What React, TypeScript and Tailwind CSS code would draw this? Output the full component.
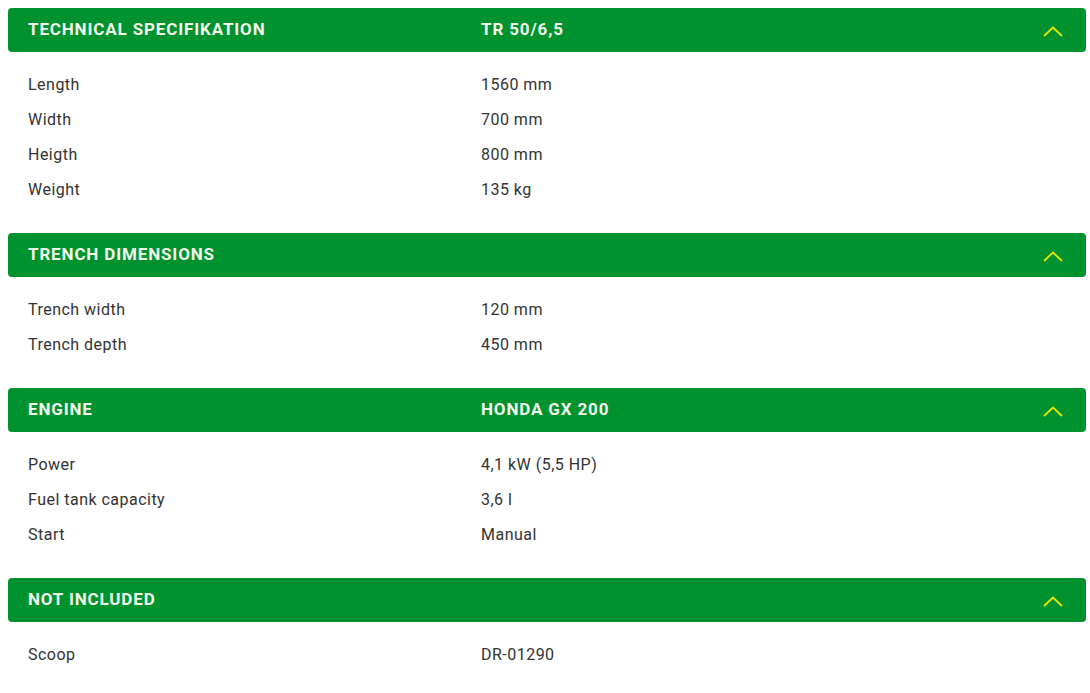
import React from "react";

type Section = {
  title: string;
  value?: string;
  rows: [string, string][];
};

const sections: Section[] = [
  {
    title: "TECHNICAL SPECIFIKATION",
    value: "TR 50/6,5",
    rows: [
      ["Length", "1560 mm"],
      ["Width", "700 mm"],
      ["Heigth", "800 mm"],
      ["Weight", "135 kg"],
    ],
  },
  {
    title: "TRENCH DIMENSIONS",
    rows: [
      ["Trench width", "120 mm"],
      ["Trench depth", "450 mm"],
    ],
  },
  {
    title: "ENGINE",
    value: "HONDA GX 200",
    rows: [
      ["Power", "4,1 kW (5,5 HP)"],
      ["Fuel tank capacity", "3,6 l"],
      ["Start", "Manual"],
    ],
  },
  {
    title: "NOT INCLUDED",
    rows: [["Scoop", "DR-01290"]],
  },
];

const Chevron = () => (
  <svg width="20" height="11" viewBox="0 0 20 11" fill="none" className="mt-[3px] shrink-0">
    <path d="M1 10L10 1.5L19 10" stroke="#e6e600" strokeWidth="1.8" />
  </svg>
);

const App = () => {
  return (
    <div className="min-h-screen bg-white pl-2 pr-1 pt-2 font-['Roboto',sans-serif]">
      {sections.map((s) => (
        <div key={s.title}>
          <div className="flex h-[44px] items-center rounded bg-[#00922f] pl-5 pr-[23px] text-[17px] font-bold tracking-[0.05em] text-[#f2f8ea]">
            <div className="w-[453px]">{s.title}</div>
            <div className="flex-1">{s.value}</div>
            <Chevron />
          </div>
          <div className="pl-5 pt-[15px] pb-[26px] text-[16px] tracking-[0.03em] text-[#333333]">
            {s.rows.map(([k, v]) => (
              <div key={k} className="flex h-[35px] items-center">
                <div className="w-[453px]">{k}</div>
                <div>{v}</div>
              </div>
            ))}
          </div>
        </div>
      ))}
    </div>
  );
};

export default App;
